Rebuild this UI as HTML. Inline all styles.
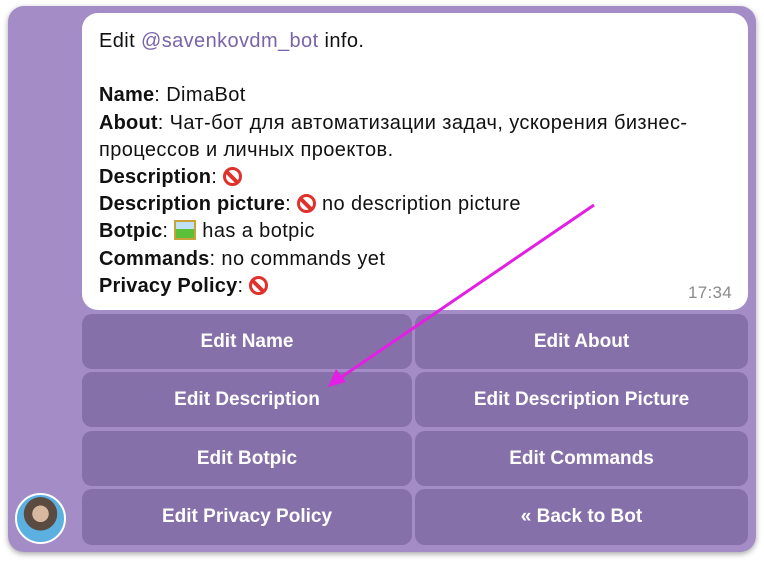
<!DOCTYPE html>
<html><head><meta charset="utf-8"><style>
body{margin:0;width:764px;height:562px;background:#fff;position:relative;overflow:hidden;font-family:"Liberation Sans","DejaVu Sans",sans-serif}
.bg{position:absolute;left:8px;top:6px;width:748px;height:546px;background:#a48dc7;border-radius:16px;box-shadow:0 2px 6px rgba(0,0,0,.35)}
.bub{position:absolute;left:82px;top:13px;width:666px;height:297px;background:#fff;border-radius:16px}
.txt{position:absolute;left:17px;top:15px;font-size:20px;letter-spacing:0.4px;line-height:27.2px;color:#111;white-space:nowrap}
.txt b{font-weight:bold;color:#111;letter-spacing:0.2px}
.lnk{color:#7a64a8}
.no{display:inline-block;width:19px;height:19px;border-radius:50%;border:3.5px solid #e0312b;box-sizing:border-box;position:relative;vertical-align:-3px}
.no:after{content:"";position:absolute;left:-1px;top:5px;width:14px;height:3.5px;background:#e0312b;transform:rotate(45deg)}
.pic{display:inline-block;width:22px;height:20px;background:linear-gradient(#bfe0f5 45%,#5cbf3a 45%);border:2px solid #c9a23a;box-sizing:border-box;vertical-align:-3px}
.time{position:absolute;right:16px;bottom:7px;font-size:17px;color:#8a8a8a;letter-spacing:0.3px}
.btn{position:absolute;background:#8670a9;border-radius:10px;color:#fff;font-size:19px;font-weight:bold;display:flex;align-items:center;justify-content:center}
.av{position:absolute;left:15px;top:493px;width:51px;height:51px;border-radius:50%;background:radial-gradient(circle at 50% 40%,#d9b8a0 0 22%,#5a4a40 23% 45%,#5bb0e0 46%);border:2px solid #fff;box-sizing:border-box}
</style></head><body>
<div class="bg"></div>
<div class="bub"><div class="txt">Edit <span class="lnk">@savenkovdm_bot</span> info.<br><br><b>Name</b>: DimaBot<br><b>About</b>: Чат-бот для автоматизации задач, ускорения бизнес-<br>процессов и личных проектов.<br><b>Description</b>: <span class="no"></span><br><b>Description picture</b>: <span class="no"></span> no description picture<br><b>Botpic</b>: <span class="pic"></span> has a botpic<br><b>Commands</b>: no commands yet<br><b>Privacy Policy</b>: <span class="no"></span></div><div class="time">17:34</div></div>
<div class="btn" style="left:82px;top:314px;width:330px;height:55px">Edit Name</div>
<div class="btn" style="left:415px;top:314px;width:333px;height:55px">Edit About</div>
<div class="btn" style="left:82px;top:372px;width:330px;height:55px">Edit Description</div>
<div class="btn" style="left:415px;top:372px;width:333px;height:55px">Edit Description Picture</div>
<div class="btn" style="left:82px;top:431px;width:330px;height:55px">Edit Botpic</div>
<div class="btn" style="left:415px;top:431px;width:333px;height:55px">Edit Commands</div>
<div class="btn" style="left:82px;top:489px;width:330px;height:56px">Edit Privacy Policy</div>
<div class="btn" style="left:415px;top:489px;width:333px;height:56px">« Back to Bot</div>
<div class="av"></div>
<svg style="position:absolute;left:0;top:0" width="764" height="562"><line x1="594" y1="205" x2="340" y2="378" stroke="#e41ee4" stroke-width="3"/><polygon points="328,387 336,369 346,382" fill="#e41ee4"/></svg>
</body></html>
